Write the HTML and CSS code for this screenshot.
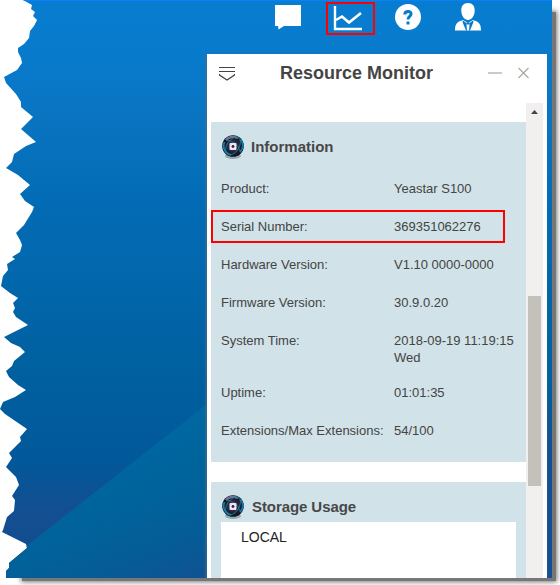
FILE: index.html
```html
<!DOCTYPE html>
<html lang="en">
<head>
<meta charset="utf-8">
<title>Resource Monitor</title>
<link rel="stylesheet" href="styles.css">
</head>
<body>
<div class="frame">
<div class="desktop">
  <svg class="wallpaper" width="552" height="578" viewBox="0 0 552 578" aria-hidden="true">
    <defs>
      <linearGradient id="sky" x1="0" y1="0" x2="0" y2="1">
        <stop offset="0" stop-color="#087dd0"/><stop offset=".11" stop-color="#087acb"/><stop offset=".22" stop-color="#0a73c0"/><stop offset=".34" stop-color="#036cb6"/><stop offset=".5" stop-color="#0266ab"/><stop offset=".65" stop-color="#00609f"/><stop offset=".8" stop-color="#02589a"/><stop offset=".88" stop-color="#124f91"/><stop offset="1" stop-color="#154b91"/>
      </linearGradient>
      <linearGradient id="slope" gradientUnits="userSpaceOnUse" x1="130" y1="405" x2="205" y2="590">
        <stop offset="0" stop-color="#006aa5"/><stop offset=".45" stop-color="#00639b"/><stop offset=".75" stop-color="#065b96"/><stop offset="1" stop-color="#154f93"/>
      </linearGradient>
    </defs>
    <path fill="url(#sky)" d="M0 0H552V578H0z"/>
    <path fill="url(#slope)" d="M0 567 207 404H552V578H0z"/>
    <path fill="#087fff" d="M0 0H552V1H0z"/>
  </svg>
  <nav class="toolbar">
    <span class="tool"><svg width="28" height="26" viewBox="0 0 28 26"><path fill="#fff" d="M1 1H27V22H10L4.500 25.500 4 22H1z"/></svg></span>
    <span class="tool tool-active"><svg width="30" height="26" viewBox="0 0 30 26" fill="none" stroke="#fff"><path stroke-width="2.400" d="M2 1V24H29"/><path stroke-width="2.600" d="M3 15 9 11.500 16 17.500 28 8"/></svg></span>
    <span class="tool"><svg width="26" height="26" viewBox="0 0 26 26"><circle cx="13" cy="13" r="13" fill="#fff"/><path fill="none" stroke="#087acc" stroke-width="3" d="M9.800 10.500C9.800 6.300 16.500 6.500 16 10.300 15.700 12.500 13 12.300 13 15.500"/><path fill="#087acc" d="M11.500 17.500h3v3h-3z"/></svg></span>
    <span class="tool"><svg width="28" height="28" viewBox="0 0 28 28"><path fill="#fff" d="M14 0C18.500 0 21 3 20.700 8 20.500 13 17.500 17 14 17S7.500 13 7.300 8C7 3 9.500 0 14 0zM9 17 14 20 19 17C24 19 27 19.500 27 27.500H1C1 19.500 4 19 9 17z"/><path fill="#087acc" d="M9 17.500 8.500 19 12 27.500H13L12.500 22 13 20.500zM19 17.500 19.500 19 16 27.500H15L15.500 22 15 20.500z"/><path fill="#087acc" d="M12.500 19.500h3l-.7 2h-1.600z"/></svg></span>
  </nav>
  <section class="window">
    <header class="titlebar">
      <svg class="menu" width="16" height="15" viewBox="0 0 16 15" fill="none" stroke="#444"><path d="M0 1.500H16M0 5.500H16"/><path stroke-width="1.200" d="M.5 8V9L8 14 15.500 9V8"/></svg>
      <h1>Resource Monitor</h1>
      <svg class="controls" width="42" height="12" viewBox="0 0 42 12" fill="none"><path stroke="#cdc9c3" stroke-width="2" d="M0 6H14"/><path stroke="#aaa79f" stroke-width="1.100" d="M30.500 1 40.500 11M40.500 1 30.500 11"/></svg>
    </header>
    <div class="body">
      <div class="content">
        <section class="card info">
          <h2><svg class="orb" width="24" height="26" viewBox="0 0 24 26">
            <defs><radialGradient id="orb"><stop offset="0" stop-color="#474364"/><stop offset=".58" stop-color="#25213b"/><stop offset="1" stop-color="#0a101e"/></radialGradient></defs>
            <ellipse cx="12" cy="22" rx="8" ry="3" fill="#6c8290" opacity=".6"/><circle cx="12" cy="12" r="10.800" fill="url(#orb)"/>
            <path fill="none" stroke="#77709c" stroke-width="2.400" d="M5 6Q9 1 17 4"/><path fill="none" stroke="#1579ae" stroke-width="1.800" d="M3.500 8Q0 17 10 21M19 5Q25 12 19 18"/><ellipse cx="12" cy="12" rx="10" ry="6" transform="rotate(-57 12 12)" fill="none" stroke="#168c82" stroke-width=".8"/><path fill="none" stroke="#238d99" stroke-width=".7" d="M5 6Q16 7 19 17"/><rect x="8.500" y="9" width="7" height="7" rx="1" fill="#eee5f6"/><circle cx="12" cy="12.500" r="1.400" fill="#36243f"/>
          </svg>Information</h2>
          <dl>
            <div class="row"><dt>Product:</dt><dd>Yeastar S100</dd></div>
            <div class="row serial"><dt>Serial Number:</dt><dd>369351062276</dd></div>
            <div class="row"><dt>Hardware Version:</dt><dd>V1.10 0000-0000</dd></div>
            <div class="row"><dt>Firmware Version:</dt><dd>30.9.0.20</dd></div>
            <div class="row time"><dt>System Time:</dt><dd>2018-09-19 11:19:15 Wed</dd></div>
            <div class="row"><dt>Uptime:</dt><dd>01:01:35</dd></div>
            <div class="row"><dt>Extensions/Max Extensions:</dt><dd>54/100</dd></div>
          </dl>
        </section>
        <section class="card storage">
          <h2><svg class="orb" width="24" height="26" viewBox="0 0 24 26">
            <ellipse cx="12" cy="22" rx="8" ry="3" fill="#6c8290" opacity=".6"/><circle cx="12" cy="12" r="10.800" fill="url(#orb)"/><path fill="none" stroke="#77709c" stroke-width="2.400" d="M5 6Q9 1 17 4"/><path fill="none" stroke="#1579ae" stroke-width="1.800" d="M3.500 8Q0 17 10 21M19 5Q25 12 19 18"/><ellipse cx="12" cy="12" rx="10" ry="6" transform="rotate(-57 12 12)" fill="none" stroke="#168c82" stroke-width=".8"/><path fill="none" stroke="#238d99" stroke-width=".7" d="M5 6Q16 7 19 17"/><rect x="8.500" y="9" width="7" height="7" rx="1" fill="#eee5f6"/><circle cx="12" cy="12.500" r="1.400" fill="#36243f"/>
          </svg>Storage Usage</h2>
          <div class="disk">LOCAL</div>
        </section>
      </div>
      <div class="scrollbar"><svg width="17" height="17" viewBox="0 0 17 17"><path fill="#444" d="M5 11 8.500 7 12 11z"/></svg><div class="thumb"></div></div>
    </div>
  </section>
</div>
</div>
</body>
</html>
```
FILE: styles.css
```css
* { box-sizing: border-box; }
body { margin: 0; background: #fff; font-family: "Liberation Sans", Arial, sans-serif; color: #444; overflow: hidden; }
.frame { width: 560px; height: 585px; position: relative; isolation: isolate; }
.frame::before { content: ""; position: absolute; z-index: -1; left: 22px; top: 12px; width: 534px; height: 569px; background: #777; box-shadow: 0 0 5px 1px #777; clip-path: polygon(500px -10px, 550px -10px, 550px 590px, -10px 590px, -10px 560px, 500px 560px); }
.desktop {
  position: relative; width: 552px; height: 578px; overflow: hidden;
  clip-path: polygon(23px 0, 32px 5px, 31px 9px, 35px 12px, 33px 16px, 37px 20px, 34px 26px, 30px 31px, 29px 38px, 24px 44px, 18px 48px, 18px 52px, 21px 58px, 22px 63px, 17px 70px, 4px 77px, 6px 83px, 16px 94px, 21px 102px, 21px 107px, 33px 117px, 21px 129px, 36px 142px, 26px 146px, 14px 154px, 12px 162px, 6px 168px, 18px 175px, 30px 185px, 20px 194px, 25px 201px, 34px 207px, 32px 212px, 24px 225px, 16px 233px, 20px 240px, 22px 245px, 20px 252px, 12px 257px, 15px 259px, 7px 264px, 8px 270px, 3px 276px, 1px 286px, 10px 293px, 18px 298px, 13px 303px, 15px 308px, 13px 312px, 16px 317px, 28px 325px, 4px 337px, 11px 343px, 20px 347px, 25px 352px, 14px 361px, 12px 366px, 6px 371px, 9px 377px, 18px 385px, 26px 390px, 15px 397px, 3px 402px, 0 409px, 5px 414px, 27px 429px, 20px 437px, 21px 441px, 9px 453px, 12px 458px, 6px 467px, 16px 477px, 19px 485px, 12px 496px, 15px 500px, 14px 511px, 7px 517px, 3px 530px, 2px 532px, 26px 544px, 27px 548px, 9px 563px, 9px 568px, 6px 571px, 6px 578px, 552px 578px, 552px 0);
}
.wallpaper { position: absolute; inset: 0; z-index: -1; }
svg { display: block; flex: none; }
.toolbar { display: flex; height: 54px; padding: 2px 0 0 274px; align-items: flex-start; }
.tool { padding-top: 2px; }
.tool:nth-child(1) { width: 28px; margin-right: 24px; }
.tool:nth-child(3) { width: 26px; margin-right: 33px; }
.tool:nth-child(4) { padding-top: 1px; }
.tool-active { width: 49px; height: 33px; margin-right: 20px; padding: 1px 0 0 5px; border: 2px solid #f00; }
.window { width: 340px; height: 524px; margin-left: 207px; background: #fff; box-shadow: -1px 1px 3px #456e8b; }
.titlebar { display: flex; align-items: center; height: 49px; padding: 0 17px 11px 12px; }
.titlebar h1 { margin: 0 auto 0 45px; font-size: 18px; line-height: 24px; white-space: nowrap; }
.body { display: flex; height: 475px; padding-left: 4px; }
.content { width: 315px; padding-top: 19px; display: flex; flex-direction: column; gap: 20px; }
.card { background: #d1e2e8; }
.info { height: 340px; flex: none; }
.storage { flex: 1; }
.card h2 { display: flex; align-items: center; margin: 0; height: 48px; padding-left: 10px; gap: 6px; font-size: 15px; color: #484848; }
.storage h2 { height: 40px; padding-top: 9px; gap: 7px; letter-spacing: -.08px; }
.orb { margin-top: 1px; }
.card dl { margin: 0; font-size: 13px; line-height: 17px; }
.row { display: flex; padding: 10px 0 11px 10px; }
.row dt { flex: none; width: 173px; white-space: nowrap; }
.row dd { margin: 0; width: 125px; }
.serial { width: 294px; height: 33px; margin: 2px 0 3px; padding: 6px 0 0 8px; border: 2px solid #f00; }
.time { padding-bottom: 8px; }
.disk { height: 56px; margin: 0 10px; padding: 7px 20px; background: #fff; color: #222; font-size: 14px; line-height: 17px; }
.scrollbar { width: 17px; height: 475px; background: #f1f0ef; }
.thumb { width: 13px; height: 190px; margin: 176px 2px 0; background: #c4c1ba; }
```
